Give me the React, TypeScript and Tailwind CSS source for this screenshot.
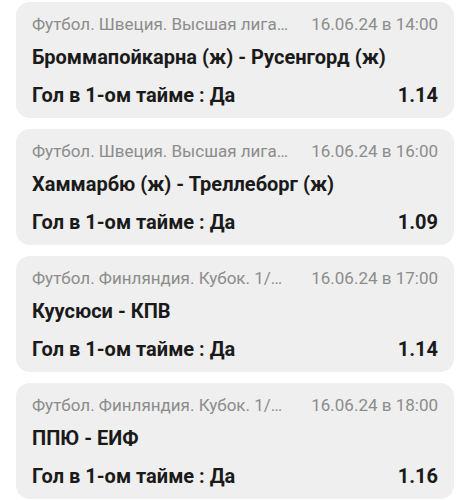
import React from "react";

type Bet = { league: string; date: string; teams: string; market: string; odd: string };

const bets: Bet[] = [
  { league: "Футбол. Швеция. Высшая лига…", date: "16.06.24 в 14:00", teams: "Броммапойкарна (ж) - Русенгорд (ж)", market: "Гол в 1-ом тайме : Да", odd: "1.14" },
  { league: "Футбол. Швеция. Высшая лига…", date: "16.06.24 в 16:00", teams: "Хаммарбю (ж) - Треллеборг (ж)", market: "Гол в 1-ом тайме : Да", odd: "1.09" },
  { league: "Футбол. Финляндия. Кубок. 1/…", date: "16.06.24 в 17:00", teams: "Куусюси - КПВ", market: "Гол в 1-ом тайме : Да", odd: "1.14" },
  { league: "Футбол. Финляндия. Кубок. 1/…", date: "16.06.24 в 18:00", teams: "ППЮ - ЕИФ", market: "Гол в 1-ом тайме : Да", odd: "1.16" },
];

export default function App() {
  return (
    <div className="w-[470px] h-[500px] bg-white overflow-hidden pt-[2px] px-4 flex flex-col gap-[11px]" style={{ fontFamily: "Roboto, 'Noto Sans', sans-serif" }}>
      {bets.map((b, i) => (
        <div key={i} className="bg-[#efefef] rounded-[14px] px-4 pt-[10px] pb-[10px] flex flex-col shrink-0">
          <div className="flex justify-between items-center h-6 text-[17px] leading-6 text-[#8c8c8c]">
            <span className="whitespace-nowrap">{b.league}</span>
            <span className="whitespace-nowrap">{b.date}</span>
          </div>
          <div className="mt-2 text-[20px] leading-[26px] font-bold text-[#1a1a1a] whitespace-nowrap">{b.teams}</div>
          <div className="mt-3 flex justify-between text-[20px] leading-[26px] font-bold text-[#1a1a1a]">
            <span>{b.market}</span>
            <span>{b.odd}</span>
          </div>
        </div>
      ))}
    </div>
  );
}
